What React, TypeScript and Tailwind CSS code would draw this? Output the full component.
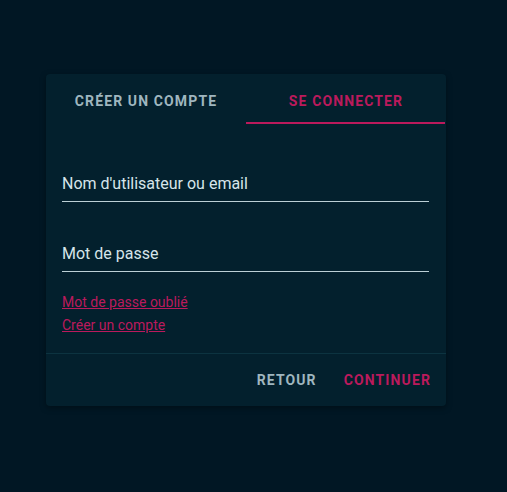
import React from "react";

export default function App() {
  return (
    <div
      className="min-h-[492px] w-full bg-[#011724] pt-[74px] pl-[46px]"
      style={{ fontFamily: "Roboto, 'Liberation Sans', sans-serif" }}
    >
      <div className="w-[400px] rounded-[4px] bg-[#03202d] shadow-[0_2px_6px_rgba(0,0,0,0.35)]">
        <div className="flex h-[50px]">
          <button className="flex w-1/2 items-center justify-center pt-[4px] text-[14px] font-bold tracking-[0.08em] text-[#9fb6bf]">
            CRÉER UN COMPTE
          </button>
          <button className="relative flex w-1/2 items-center justify-center pt-[4px] text-[14px] font-bold tracking-[0.08em] text-[#bb1a5c]">
            SE CONNECTER
            <span className="absolute bottom-0 left-0 right-[1px] h-[2px] bg-[#bb1a5c]" />
          </button>
        </div>
        <div className="pl-[16px] pr-[17px] pt-[48px]">
          <div className="h-[30px] border-b border-[#bcd0d6] text-[16px] leading-[24px] text-[#d6e5ea]">
            Nom d'utilisateur ou email
          </div>
          <div className="mt-[40px] h-[30px] border-b border-[#bcd0d6] text-[16px] leading-[24px] text-[#d6e5ea]">
            Mot de passe
          </div>
          <div className="mt-[20px] flex flex-col items-start gap-[3px] text-[14px] leading-[20px] text-[#bb1a5c]">
            <a className="underline">Mot de passe oublié</a>
            <a className="underline">Créer un compte</a>
          </div>
        </div>
        <div className="mt-[18px] border-t border-[#0c3340]" />
        <div className="flex h-[52px] items-center justify-end gap-[27px] pr-[15px]">
          <button className="text-[14px] font-bold tracking-[0.08em] text-[#9fb6bf]">RETOUR</button>
          <button className="text-[14px] font-bold tracking-[0.08em] text-[#bb1a5c]">CONTINUER</button>
        </div>
      </div>
    </div>
  );
}
